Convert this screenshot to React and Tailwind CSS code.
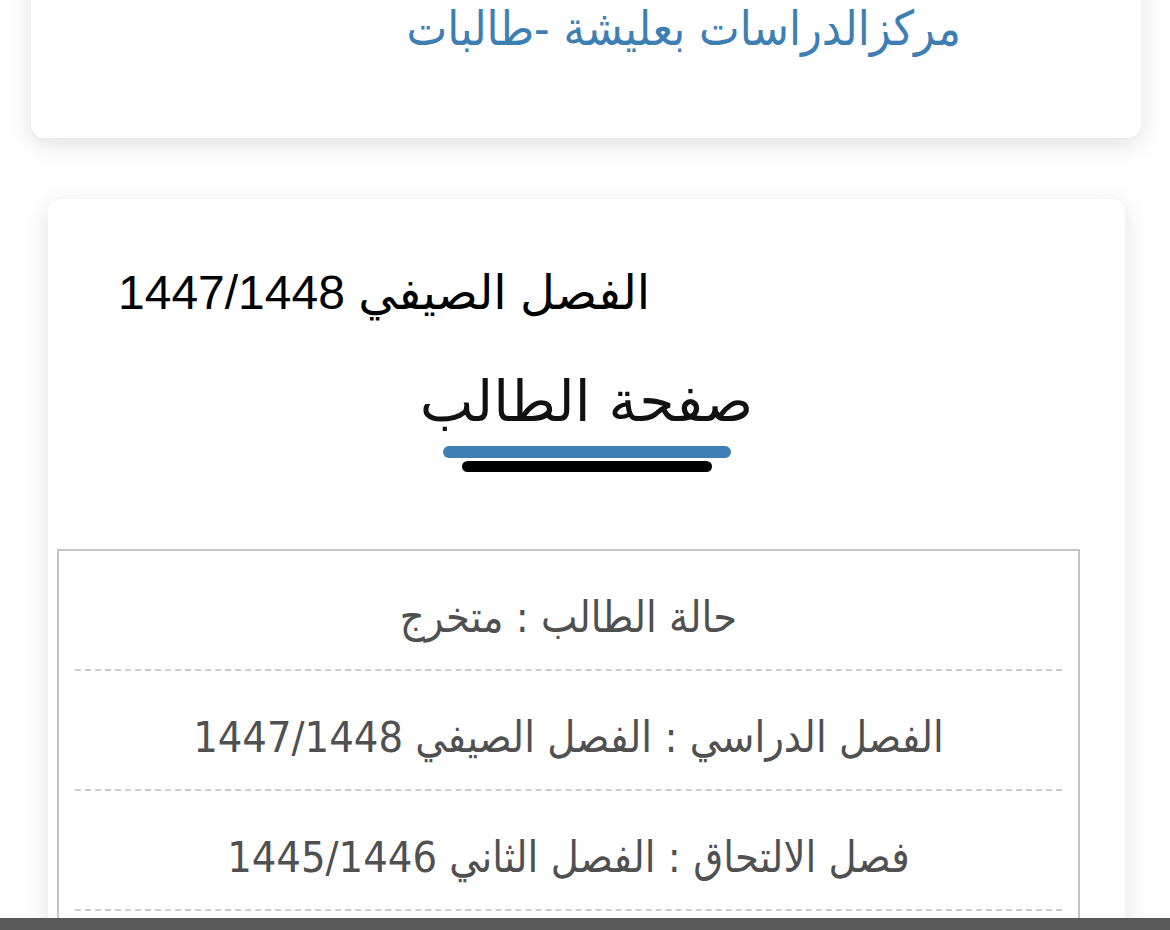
const rows = [
  "حالة الطالب : متخرج",
  "الفصل الدراسي : الفصل الصيفي 1447/1448",
  "فصل الالتحاق : الفصل الثاني 1445/1446",
];

const narrow = {
  fontFamily: '"Liberation Sans Narrow", "DejaVu Sans Condensed", "DejaVu Sans", sans-serif',
};

function InfoRow({ text }) {
  return (
    <div className="h-[120px] mx-[16px] flex flex-col">
      <div className="flex-1 flex items-center justify-center pt-[14px]">
        <span dir="rtl" className="text-[43px] leading-none font-stretch-condensed text-[#505050]" style={narrow}>
          {text}
        </span>
      </div>
      <div className="border-b-2 border-dashed border-[#cccccc]" />
    </div>
  );
}

export default function App() {
  return (
    <div
      className="relative h-[930px] overflow-hidden bg-white"
      style={{ fontFamily: '"DejaVu Sans", "Noto Sans", sans-serif' }}
    >
      {/* center name */}
      <div className="mx-[31px] w-[1110px] -mt-[40px] h-[178px] bg-white rounded-[14px] shadow-[0_6px_24px_rgba(0,0,0,0.13)] flex justify-end pr-[180px] pt-[40px]">
        <h1 dir="rtl" className="text-[48px] leading-[1.2] font-stretch-condensed text-[#3e7fb2] h-fit" style={narrow}>
          مركزالدراسات بعليشة -طالبات
        </h1>
      </div>

      {/* student card */}
      <div className="mt-[61px] ml-[48px] w-[1077px] bg-white rounded-[14px] shadow-[0_6px_24px_rgba(0,0,0,0.13)] pt-[70px] pb-[40px]">
        <div className="pl-[70px]">
          <p
            dir="rtl"
            className="text-[48px] leading-none text-black w-fit"
            style={{ fontFamily: '"Liberation Sans", "DejaVu Sans", sans-serif' }}
          >
            الفصل الصيفي 1447/1448
          </p>
        </div>

        <div className="mt-[56px] flex flex-col items-center">
          <h2 dir="rtl" className="text-[57px] leading-none text-[#111111]">
            صفحة الطالب
          </h2>
          <div className="mt-[16px] w-[288px] h-[12px] rounded-full bg-[#3e7fb5]" />
          <div className="mt-[3px] w-[250px] h-[11px] rounded-full bg-black" />
        </div>

        <div className="mt-[77px] ml-[9px] w-[1023px] border-2 border-[#c4c4c4]">
          {rows.map((r) => (
            <InfoRow key={r} text={r} />
          ))}
          <div className="h-[60px]" />
        </div>
      </div>

      {/* bottom bar */}
      <div className="absolute bottom-0 left-0 right-0 h-[12px] bg-[#595959]" />
    </div>
  );
}
